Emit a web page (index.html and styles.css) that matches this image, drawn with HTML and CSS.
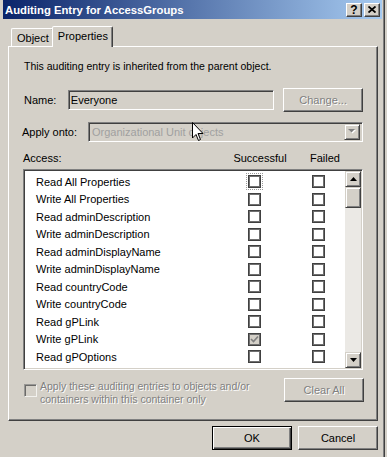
FILE: index.html
```html
<!DOCTYPE html>
<html lang="en">
<head>
  <meta charset="UTF-8" />
  <meta name="viewport" content="width=device-width, initial-scale=1" />
  <title>Auditing Entry for AccessGroups</title>
  <link rel="stylesheet" href="styles.css">
</head>
<body>

  <div class="window">
    <div class="titlebar">
      <span class="title">Auditing Entry for AccessGroups</span>
      <div class="caption-btns">
        <span class="cbtn help">?</span>
        <span class="cbtn close">
          <svg width="8" height="7" viewBox="0 0 8 7"><path d="M0.5 0.5 L7.5 6.5 M7.5 0.5 L0.5 6.5" stroke="#000" stroke-width="1.8" fill="none"/></svg>
        </span>
      </div>
    </div>

    <div class="content">
      <div class="tabs">
        <div class="tab">Object</div>
        <div class="tab active">Properties</div>
      </div>

      <div class="panel">
        <div class="info">This auditing entry is inherited from the parent object.</div>

        <div class="row name-row">
          <span class="name-label">Name:</span>
          <div class="field name-field">Everyone</div>
          <div class="btn change-btn"><span class="dis">Change...</span></div>
        </div>

        <div class="row apply-row">
          <span class="apply-label">Apply onto:</span>
          <div class="field combo">
            <span class="combo-text">Organizational Unit objects</span>
            <span class="combo-arrow">
              <svg width="8" height="5" viewBox="0 0 8 5"><polygon points="1,1 8,1 4.5,4.5" fill="#fff"/><polygon points="0,0 7,0 3.5,3.5" fill="#808080"/></svg>
            </span>
          </div>
        </div>

        <div class="access-head">
          <span>Access:</span>
          <span class="col">Successful</span>
          <span class="col">Failed</span>
        </div>

        <div class="listbox">
          <div class="rows">
            <div class="lrow"><span>Read All Properties</span><span class="cb focus"></span><span></span><span class="cb"></span></div>
            <div class="lrow"><span>Write All Properties</span><span class="cb"></span><span></span><span class="cb"></span></div>
            <div class="lrow"><span>Read adminDescription</span><span class="cb"></span><span></span><span class="cb"></span></div>
            <div class="lrow"><span>Write adminDescription</span><span class="cb"></span><span></span><span class="cb"></span></div>
            <div class="lrow"><span>Read adminDisplayName</span><span class="cb"></span><span></span><span class="cb"></span></div>
            <div class="lrow"><span>Write adminDisplayName</span><span class="cb"></span><span></span><span class="cb"></span></div>
            <div class="lrow"><span>Read countryCode</span><span class="cb"></span><span></span><span class="cb"></span></div>
            <div class="lrow"><span>Write countryCode</span><span class="cb"></span><span></span><span class="cb"></span></div>
            <div class="lrow"><span>Read gPLink</span><span class="cb"></span><span></span><span class="cb"></span></div>
            <div class="lrow"><span>Write gPLink</span><span class="cb checked"><svg width="9" height="9" viewBox="0 0 9 9"><path d="M1 4 L3.5 6.5 L8 1.5" stroke="#808080" stroke-width="1.7" fill="none"/></svg></span><span></span><span class="cb"></span></div>
            <div class="lrow"><span>Read gPOptions</span><span class="cb"></span><span></span><span class="cb"></span></div>
          </div>
          <div class="scrollbar">
            <div class="sbtn">
              <svg width="7" height="4" viewBox="0 0 7 4"><polygon points="3.5,0 7,4 0,4" fill="#000"/></svg>
            </div>
            <div class="thumb"></div>
            <div class="track"></div>
            <div class="sbtn">
              <svg width="7" height="4" viewBox="0 0 7 4"><polygon points="0,0 7,0 3.5,4" fill="#000"/></svg>
            </div>
          </div>
        </div>

        <div class="bottom-row">
          <span class="cb-dis"></span>
          <span class="apply-text dis">Apply these auditing entries to objects and/or<br>containers within this container only</span>
          <div class="btn clear-btn"><span class="dis">Clear All</span></div>
        </div>
      </div>

      <div class="footer">
        <div class="btn default">OK</div>
        <div class="btn">Cancel</div>
      </div>
    </div>

    <!-- mouse pointer over the combo -->
    <svg class="pointer" width="12" height="20" viewBox="0 0 12 20">
      <polygon points="0.5,0.5 0.5,16 4,12.5 6.5,18.5 8.5,17.5 6,11.5 11,11.5" fill="#fff" stroke="#000" stroke-width="1"/>
    </svg>
  </div>

</body>
</html>
```

FILE: styles.css
```css
body {
  margin: 0;
  background: #d4d0c8;
  font-family: "Liberation Sans", Arial, sans-serif;
  font-size: 11px;
  color: #000;
}

.window {
  position: relative;
  width: 385px;
  height: 457px;
  box-sizing: border-box;
  padding: 0 2px 0 3px;
  border-right: 1px solid #404040;
  box-shadow: inset -1px 0 #808080;
  overflow: hidden;
}

/* === Title bar === */
.titlebar {
  height: 19px;
  display: flex;
  align-items: center;
  justify-content: space-between;
  padding: 0 2px 0 2px;
  background: linear-gradient(to right, #0a246a, #a6caf0);
}

.title {
  color: #fff;
  font-weight: bold;
  font-size: 11.3px;
  white-space: nowrap;
}

.caption-btns {
  display: flex;
  gap: 2px;
}

.cbtn {
  width: 16px;
  height: 14px;
  box-sizing: border-box;
  display: flex;
  align-items: center;
  justify-content: center;
  background: #d4d0c8;
  border: 1px solid;
  border-color: #fff #404040 #404040 #fff;
  box-shadow: inset -1px -1px #808080;
  font-weight: bold;
  font-size: 12px;
  line-height: 12px;
}

/* === Content === */
.content {
  padding: 7px 4px 0 5px;
}

.tabs {
  display: flex;
  align-items: flex-end;
  height: 20px;
  padding-left: 3px;
}

.tab {
  height: 18px;
  box-sizing: border-box;
  padding: 0 4px 0 5px;
  display: flex;
  align-items: center;
  border: 1px solid;
  border-bottom: none;
  border-color: #fff #404040 transparent #fff;
  box-shadow: inset -1px 0 #808080;
  border-radius: 2px 2px 0 0;
}

.tab.active {
  position: relative;
  z-index: 1;
  height: 21px;
  margin-left: -2px;
  margin-bottom: -1px;
  padding: 0 4px 2px 5px;
  background: #d4d0c8;
}

.panel {
  width: 370px;
  height: 375px;
  box-sizing: border-box;
  padding: 13px 14px 0 14px;
  border: 1px solid;
  border-color: #fff #404040 #404040 #fff;
  box-shadow: inset -1px -1px #808080;
}

.info {
  height: 13px;
  line-height: 13px;
  margin-left: 1px;
  font-size: 10.5px;
}

.row {
  display: flex;
  align-items: center;
}

.name-row {
  margin-top: 15px;
  height: 24px;
}

.name-label {
  width: 44px;
  margin-left: 1px;
}

.field {
  box-sizing: border-box;
  border: 1px solid;
  border-color: #808080 #fff #fff #808080;
  box-shadow: inset 1px 1px #404040, inset -1px -1px #d4d0c8;
  background: #d4d0c8;
}

.name-field {
  width: 207px;
  height: 20px;
  line-height: 18px;
  padding-left: 2px;
}

.btn {
  box-sizing: border-box;
  width: 80px;
  height: 24px;
  display: flex;
  align-items: center;
  justify-content: center;
  background: #d4d0c8;
  border: 1px solid;
  border-color: #fff #404040 #404040 #fff;
  box-shadow: inset -1px -1px #808080;
}

.dis {
  color: #808080;
  text-shadow: 1px 1px 0 #fff;
}

.change-btn {
  margin-left: 9px;
}

.apply-row {
  margin-top: 9px;
  height: 21px;
}

.apply-label {
  width: 66px;
  margin-left: -1px;
}

.combo {
  width: 275px;
  height: 20px;
  display: flex;
  align-items: center;
  padding: 0 2px 0 3px;
}

.combo-text {
  color: #a0a0a0;
  flex: 1;
}

.combo-arrow {
  width: 16px;
  height: 16px;
  box-sizing: border-box;
  display: flex;
  align-items: center;
  justify-content: center;
  border: 1px solid;
  border-color: #d4d0c8 #404040 #404040 #d4d0c8;
  box-shadow: inset 1px 1px #fff, inset -1px -1px #808080;
}

.access-head {
  margin-top: 10px;
  height: 13px;
  line-height: 13px;
  display: grid;
  grid-template-columns: 202px 60px 60px;
  column-gap: 5px;
}

.access-head .col {
  text-align: center;
}

/* === List with checkboxes === */
.listbox {
  margin-top: 4px;
  height: 201px;
  box-sizing: border-box;
  display: flex;
  background: #fff;
  border: 1px solid;
  border-color: #808080 #fff #fff #808080;
  box-shadow: inset 1px 1px #404040, inset -1px -1px #d4d0c8;
  padding: 1px;
}

.rows {
  flex: 1;
  padding-top: 2px;
}

.lrow {
  display: grid;
  grid-template-columns: 212px 13px 51px 13px;
  align-items: center;
  height: 17.5px;
  padding-left: 11px;
}

.cb {
  width: 13px;
  height: 13px;
  box-sizing: border-box;
  border: 1px solid #404040;
  box-shadow: inset 0 0 0 1px #707070;
  background: #fff;
  display: flex;
  align-items: center;
  justify-content: center;
}

.cb.focus {
  outline: 1px dotted #999;
  outline-offset: 1px;
}

.cb.checked {
  background: #d4d0c8;
}

.scrollbar {
  width: 16px;
  display: flex;
  flex-direction: column;
}

.sbtn,
.thumb {
  box-sizing: border-box;
  width: 16px;
  background: #d4d0c8;
  border: 1px solid;
  border-color: #d4d0c8 #404040 #404040 #d4d0c8;
  box-shadow: inset 1px 1px #fff, inset -1px -1px #808080;
}

.sbtn {
  height: 16px;
  display: flex;
  align-items: center;
  justify-content: center;
}

.thumb {
  height: 21px;
}

.track {
  flex: 1;
  background: #ebe9e5;
}

/* === Bottom row === */
.bottom-row {
  margin-top: 8px;
  height: 24px;
  display: flex;
  align-items: flex-start;
}

.cb-dis {
  width: 13px;
  height: 13px;
  box-sizing: border-box;
  margin: 6px 0 0 1px;
  border: 1px solid;
  border-color: #808080 #fff #fff #808080;
  box-shadow: inset 1px 1px #404040;
  opacity: 0.7;
}

.apply-text {
  margin: 2px 0 0 3px;
  line-height: 13px;
  flex: 1;
  white-space: nowrap;
  font-size: 10.5px;
}

.clear-btn {
  margin-right: -1px;
}

/* === Footer === */
.footer {
  display: flex;
  justify-content: flex-end;
  gap: 6px;
  padding-top: 5px;
}

.footer .btn {
  height: 24px;
}

.btn.default {
  border: 1px solid #000;
  box-shadow: inset 1px 1px #fff, inset -1px -1px #404040, inset -2px -2px #808080;
}

.pointer {
  position: absolute;
  left: 192px;
  top: 122px;
}
```
